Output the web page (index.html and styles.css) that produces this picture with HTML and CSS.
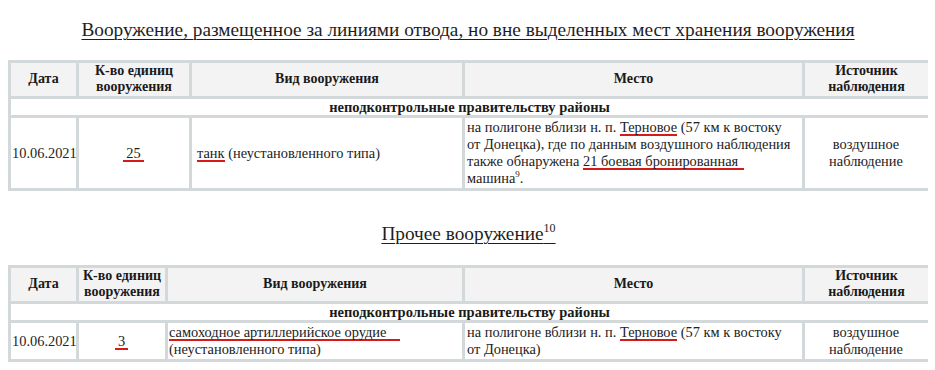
FILE: index.html
```html
<!DOCTYPE html>
<html>
<head>
<meta charset="utf-8">
<link rel="stylesheet" href="styles.css">
</head>
<body>
<h2 class="title title-first"><span class="u">Вооружение, размещенное за линиями отвода, но вне выделенных мест хранения вооружения</span></h2>
<table class="report t1">
  <colgroup><col class="c1"><col class="c2a"><col class="c3a"><col class="c4"><col class="c5"></colgroup>
  <tr class="head">
    <th>Дата</th><th>К-во единиц вооружения</th><th>Вид вооружения</th><th>Место</th><th>Источник наблюдения</th>
  </tr>
  <tr class="sub"><th colspan="5">неподконтрольные правительству районы</th></tr>
  <tr class="row">
    <td class="date">10.06.2021</td>
    <td class="num"><span class="mark pad">25</span></td>
    <td class="kind kind1"><span class="mark">танк</span> (неустановленного типа)</td>
    <td class="place">на полигоне вблизи н. п. <span class="mark">Терновое</span> (57 км к востоку<br>от Донецка), где по данным воздушного наблюдения также обнаружена <span class="mark trail">21 боевая бронированная</span> машина<sup>9</sup>.</td>
    <td class="src">воздушное наблюдение</td>
  </tr>
</table>
<h2 class="title title-second"><span class="u">Прочее вооружение<sup>10</sup></span></h2>
<table class="report t2">
  <colgroup><col class="c1"><col class="c2b"><col class="c3b"><col class="c4"><col class="c5"></colgroup>
  <tr class="head">
    <th>Дата</th><th>К-во единиц вооружения</th><th>Вид вооружения</th><th>Место</th><th>Источник наблюдения</th>
  </tr>
  <tr class="sub"><th colspan="5">неподконтрольные правительству районы</th></tr>
  <tr class="row">
    <td class="date">10.06.2021</td>
    <td class="num"><span class="mark pad">3</span></td>
    <td class="kind kind2"><span class="mark trail-long">самоходное артиллерийское орудие</span> (неустановленного типа)</td>
    <td class="place">на полигоне вблизи н. п. <span class="mark">Терновое</span> (57 км к востоку<br>от Донецка)</td>
    <td class="src">воздушное наблюдение</td>
  </tr>
</table>
</body>
</html>
```
FILE: styles.css
```css
html, body {
  background: #ffffff;
}
body {
  margin: 0 7px 0 8px;
  font-family: "Liberation Serif", "Times New Roman", serif;
  color: #222;
  font-size: 14.4px;
}
.title {
  font-weight: normal;
  font-size: 19.3px;
  line-height: 22px;
  text-align: center;
  margin: 0;
  color: #1e1e1e;
}
.title .u {
  text-decoration: underline;
  text-decoration-thickness: 1px;
  text-underline-offset: 3px;
}
.title sup {
  font-size: 12px;
  line-height: 0;
  vertical-align: 8px;
}
.title-first {
  padding-top: 19px;
  margin-bottom: 19px;
}
.title-second {
  margin-top: 32px;
  padding-left: 1px;
  margin-bottom: 20px;
}
.report {
  width: 100%;
  border-collapse: collapse;
  table-layout: fixed;
  border: 3px solid #d3d8db;
}
.report th,
.report td {
  border: 3px solid #d3d8db;
  vertical-align: middle;
}
.c1 { width: 68px; }
.c2a { width: 113px; }
.c3a { width: 273px; }
.c2b { width: 89px; }
.c3b { width: 297px; }
.c4 { width: 340px; }
.c5 { width: 126px; }
.head th {
  background: #f3f3f3;
  font-weight: bold;
  font-size: 14px;
  text-align: center;
  padding: 0 2px 1px;
  height: 32px;
  line-height: 16px;
  color: #1a1a1a;
}
.sub th {
  background: #ffffff;
  font-weight: bold;
  font-size: 14.5px;
  text-align: center;
  padding: 0 2px;
  height: 16px;
  line-height: 16px;
  color: #1a1a1a;
}
.row td {
  padding: 1px 2px 1px 1px;
  line-height: 17px;
}
.date {
  white-space: nowrap;
  padding-left: 1px !important;
  padding-right: 0 !important;
}
.num {
  text-align: center;
}
.kind1 {
  padding-left: 5px !important;
}
.kind2 {
  padding-left: 1px !important;
}
.place {
  padding-left: 2px !important;
  padding-right: 0 !important;
}
.src {
  text-align: center;
}
.row sup {
  font-size: 9px;
  line-height: 0;
  vertical-align: 6px;
}
.mark {
  background-image: linear-gradient(#d61a1a, #d61a1a);
  background-repeat: no-repeat;
  background-position: 0 100%;
  background-size: 100% 2px;
  padding-bottom: 1px;
}
.mark.pad {
  padding-left: 3px;
  padding-right: 3px;
}
.mark.trail {
  padding-right: 6px;
}
.mark.trail-long {
  padding-right: 14px;
}
```
